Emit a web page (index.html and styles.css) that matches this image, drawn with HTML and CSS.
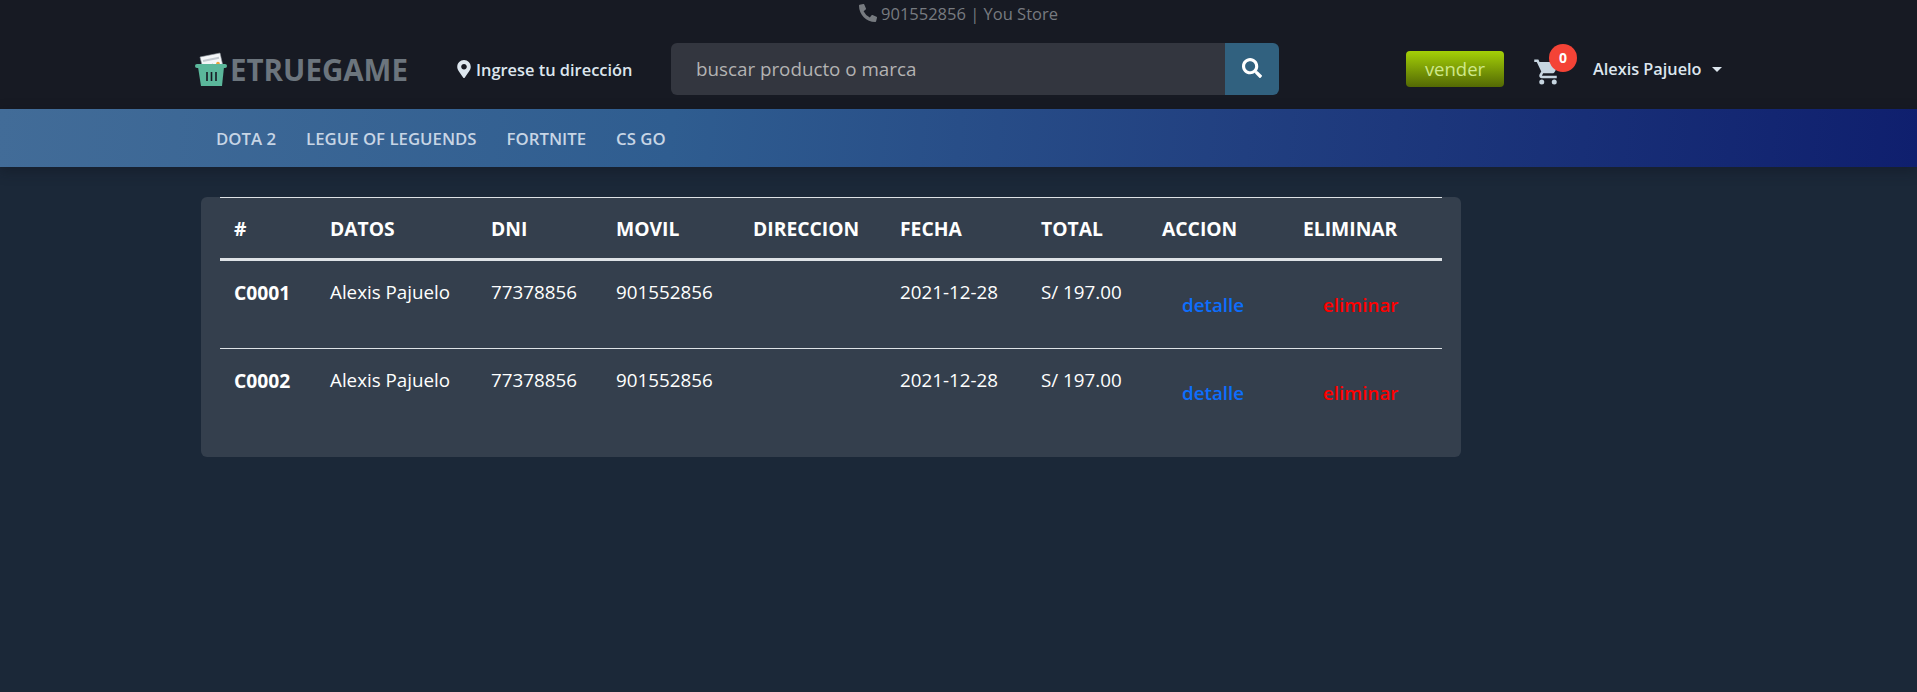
FILE: index.html
```html
<!DOCTYPE html>
<html lang="es">
  <head>
    <meta charset="UTF-8" />
    <meta name="viewport" content="width=device-width, initial-scale=1.0" />
    <title>eTrueGame</title>
    <link rel="stylesheet" href="styles.css">
  </head>
  <body>
    <header class="top">
      <p class="top-phone">
        <svg class="icon-phone" viewBox="0 0 512 512"><path d="M497.39 361.8l-112-48a24 24 0 0 0-28 6.9l-49.6 60.6A370.66 370.66 0 0 1 130.6 204.11l60.6-49.6a23.94 23.94 0 0 0 6.9-28l-48-112A24.16 24.16 0 0 0 122.6.61l-104 24A24 24 0 0 0 0 48c0 256.5 207.9 464 464 464a24 24 0 0 0 23.4-18.6l24-104a24.29 24.29 0 0 0-14.01-27.6z" fill="currentColor"/></svg>
        901552856 | You Store
      </p>
      <div class="top-main">
        <a class="brand" href="#">
          <svg class="brand-logo" viewBox="0 0 35 36">
            <path d="M5 6 25 2 27.500 13 8 18z" fill="#f4f6f8" stroke="#8f979e" stroke-width=".6"/>
            <path d="M8 10 24 6.800" stroke="#c4cad0" stroke-width="2"/>
            <path d="M10 15.500 18 13.800" stroke="#4c4f55" stroke-width="2"/>
            <circle cx="23" cy="12.500" r="1.800" fill="#e8a23a"/>
            <rect x="0" y="13" width="32" height="4" rx="2" fill="#5bb79b"/>
            <path d="M3 16h26l-2 19H6z" fill="#5bb79b"/>
            <path d="M12 21v9M16.500 21v9M21 21v9" stroke="#171a23" stroke-width="1.600"/>
          </svg>
          <span>ETRUEGAME</span>
        </a>
        <a class="address" href="#">
          <svg class="icon-pin" viewBox="0 0 384 512"><path d="M172.268 501.67C26.97 291.031 0 269.413 0 192 0 85.961 85.961 0 192 0s192 85.961 192 192c0 77.413-26.97 99.031-172.268 309.67-9.535 13.774-29.93 13.773-39.464 0zM192 272c44.183 0 80-35.817 80-80s-35.817-80-80-80-80 35.817-80 80 35.817 80 80 80z" fill="currentColor"/></svg>
          Ingrese tu dirección
        </a>
        <form class="search">
          <input class="search-input" type="text" placeholder="buscar producto o marca">
          <button class="search-btn" type="button">
            <svg viewBox="0 0 512 512"><path d="M505 442.7L405.3 343c-4.500-4.500-10.600-7-17-7H372c27.600-35.300 44-79.700 44-128C416 93.100 322.900 0 208 0S0 93.100 0 208s93.100 208 208 208c48.300 0 92.700-16.400 128-44v16.300c0 6.400 2.500 12.500 7 17l99.700 99.700c9.400 9.400 24.600 9.400 33.900 0l28.300-28.300c9.400-9.400 9.400-24.600.1-34zM208 336c-70.700 0-128-57.200-128-128 0-70.700 57.200-128 128-128 70.700 0 128 57.200 128 128 0 70.700-57.200 128-128 128z" fill="currentColor"/></svg>
          </button>
        </form>
        <a class="sell" href="#">vender</a>
        <a class="cart" href="#">
          <svg class="icon-cart" viewBox="0 0 24 24"><path d="M7 18a2 2 0 1 0 0 4 2 2 0 0 0 0-4zM1 2v2h2l3.600 7.600L5.200 14c-.1.300-.2.700-.2 1 0 1.100.9 2 2 2h12v-2H7.400c-.1 0-.2-.1-.2-.2v-.1l.9-1.700h7.500c.7 0 1.400-.4 1.700-1l3.600-6.500c.1-.1.1-.3.1-.5 0-.6-.4-1-1-1H5.200l-.9-2H1zm16 16a2 2 0 1 0 0 4 2 2 0 0 0 0-4z" fill="currentColor"/></svg>
          <span class="cart-badge">0</span>
        </a>
        <a class="user" href="#">Alexis Pajuelo<span class="caret"></span></a>
      </div>
    </header>

    <nav class="cats">
      <a href="#">DOTA 2</a>
      <a href="#">LEGUE OF LEGUENDS</a>
      <a href="#">FORTNITE</a>
      <a href="#">CS GO</a>
    </nav>

    <main class="content">
      <section class="card">
        <table class="orders">
          <colgroup>
            <col class="c-id"><col class="c-name"><col class="c-dni"><col class="c-phone"><col class="c-addr">
            <col class="c-date"><col class="c-total"><col class="c-action"><col class="c-del">
          </colgroup>
          <thead>
            <tr>
              <th>#</th><th>DATOS</th><th>DNI</th><th>MOVIL</th><th>DIRECCION</th>
              <th>FECHA</th><th>TOTAL</th><th>ACCION</th><th>ELIMINAR</th>
            </tr>
          </thead>
          <tbody>
            <tr>
              <th>C0001</th><td>Alexis Pajuelo</td><td>77378856</td><td>901552856</td><td></td>
              <td>2021-12-28</td><td>S/ 197.00</td>
              <td><a class="link link-detail" href="#">detalle</a></td>
              <td><a class="link link-delete" href="#">eliminar</a></td>
            </tr>
            <tr>
              <th>C0002</th><td>Alexis Pajuelo</td><td>77378856</td><td>901552856</td><td></td>
              <td>2021-12-28</td><td>S/ 197.00</td>
              <td><a class="link link-detail" href="#">detalle</a></td>
              <td><a class="link link-delete" href="#">eliminar</a></td>
            </tr>
          </tbody>
        </table>
      </section>
    </main>
  </body>
</html>
```

FILE: styles.css
```css
* {
  box-sizing: border-box;
}

html,
body {
  height: 100%;
}

body {
  margin: 0;
  background: #1b2838;
  color: #fff;
  font-family: "Open Sans", "Noto Sans", sans-serif;
  overflow: hidden;
}

a {
  color: inherit;
  text-decoration: none;
}

.top {
  height: 109px;
  background: #171a23;
}

.top-phone {
  margin: 0;
  height: 23px;
  padding-top: 3px;
  display: flex;
  justify-content: center;
  align-items: center;
  gap: 4px;
  font-size: 16.500px;
  color: #777b80;
}

.icon-phone {
  width: 18px;
  height: 18px;
}

.top-main {
  display: flex;
  align-items: center;
  height: 52px;
  margin-top: 20px;
  padding-left: 195px;
}

.brand {
  display: flex;
  align-items: center;
  width: 262px;
  color: #6c757d;
  font-size: 29.500px;
  font-weight: 700;
}

.brand-logo {
  width: 35px;
  height: 36px;
}

.address {
  display: flex;
  align-items: center;
  gap: 5px;
  width: 214px;
  font-size: 16.400px;
  font-weight: 600;
  color: #dde6ee;
}

.icon-pin {
  width: 14px;
  height: 18px;
}

.search {
  display: flex;
  width: 608px;
  height: 52px;
  border-radius: 6px;
  overflow: hidden;
}

.search-input {
  flex: 1;
  border: 0;
  padding: 0 25px;
  background: #33363f;
  color: #fff;
  font: 18.800px "Open Sans", sans-serif;
}

.search-input::placeholder {
  color: #b3b3b3;
  opacity: 1;
}

.search-btn {
  width: 54px;
  border: 0;
  padding: 0;
  background: #31617f;
  color: #fff;
}

.search-btn svg {
  display: block;
  width: 20px;
  height: 20px;
  margin: -3px auto 0;
}

.sell {
  width: 98px;
  height: 36px;
  margin-left: 127px;
  border-radius: 4px;
  background: linear-gradient(#a4d007, #536904);
  color: #cfe88a;
  font-size: 18.500px;
  line-height: 35px;
  text-align: center;
}

.cart {
  position: relative;
  width: 60px;
  margin-left: 29px;
  color: #c7d5e0;
}

.icon-cart {
  display: block;
  width: 30px;
  height: 30px;
  margin-top: 5px;
}

.cart-badge {
  position: absolute;
  left: 16px;
  top: -8px;
  width: 28px;
  height: 28px;
  border-radius: 50%;
  background: #f44336;
  color: #fff;
  font-size: 14px;
  font-weight: 700;
  line-height: 28px;
  text-align: center;
}

.user {
  display: flex;
  align-items: center;
  font-size: 16.300px;
  font-weight: 600;
  color: #dde6ee;
}

.caret {
  width: 0;
  height: 0;
  margin-left: 10px;
  border-top: 5px solid #dde6ee;
  border-left: 5px solid transparent;
  border-right: 5px solid transparent;
}

.cats {
  display: flex;
  align-items: center;
  gap: 30px;
  height: 58px;
  padding-left: 216px;
  background: linear-gradient(95deg, #426c98 0%, #2f5d90 35%, #213f80 65%, #0f1f6e 100%);
  box-shadow: 0 4px 12px rgba(15, 20, 30, 0.45);
  color: #c7d5e5;
  font-size: 16.800px;
  font-weight: 600;
}

.content {
  padding: 30px 0 0 201px;
}

.card {
  width: 1260px;
  height: 260px;
  padding: 0 19px;
  border-radius: 6px;
  background: #343f4d;
}

.orders {
  width: 1222px;
  table-layout: fixed;
  border-collapse: collapse;
  font-size: 18.800px;
}

.c-id { width: 98px; }
.c-name { width: 161px; }
.c-dni { width: 125px; }
.c-phone { width: 137px; }
.c-addr { width: 147px; }
.c-date { width: 141px; }
.c-total { width: 121px; }
.c-action { width: 141px; }
.c-del { width: 151px; }

.orders th,
.orders td {
  padding: 18px 12px 0;
  text-align: left;
  vertical-align: top;
  white-space: nowrap;
}

.orders th {
  font-size: 19.300px;
}

.orders thead th {
  padding-top: 17px;
}

.orders th:first-child {
  padding-left: 14px;
}

.orders thead tr {
  height: 62px;
  border-top: 1px solid #dee2e6;
  border-bottom: 3px solid #dee2e6;
}

.orders tbody tr {
  height: 88px;
}

.orders tbody tr:first-child {
  height: 89px;
  border-bottom: 1px solid #dee2e6;
}

.link {
  display: inline-block;
  padding: 13px 0 0 20px;
  font-weight: 600;
}

.link-detail {
  color: #0d6efd;
}

.link-delete {
  color: #f00;
}
```
